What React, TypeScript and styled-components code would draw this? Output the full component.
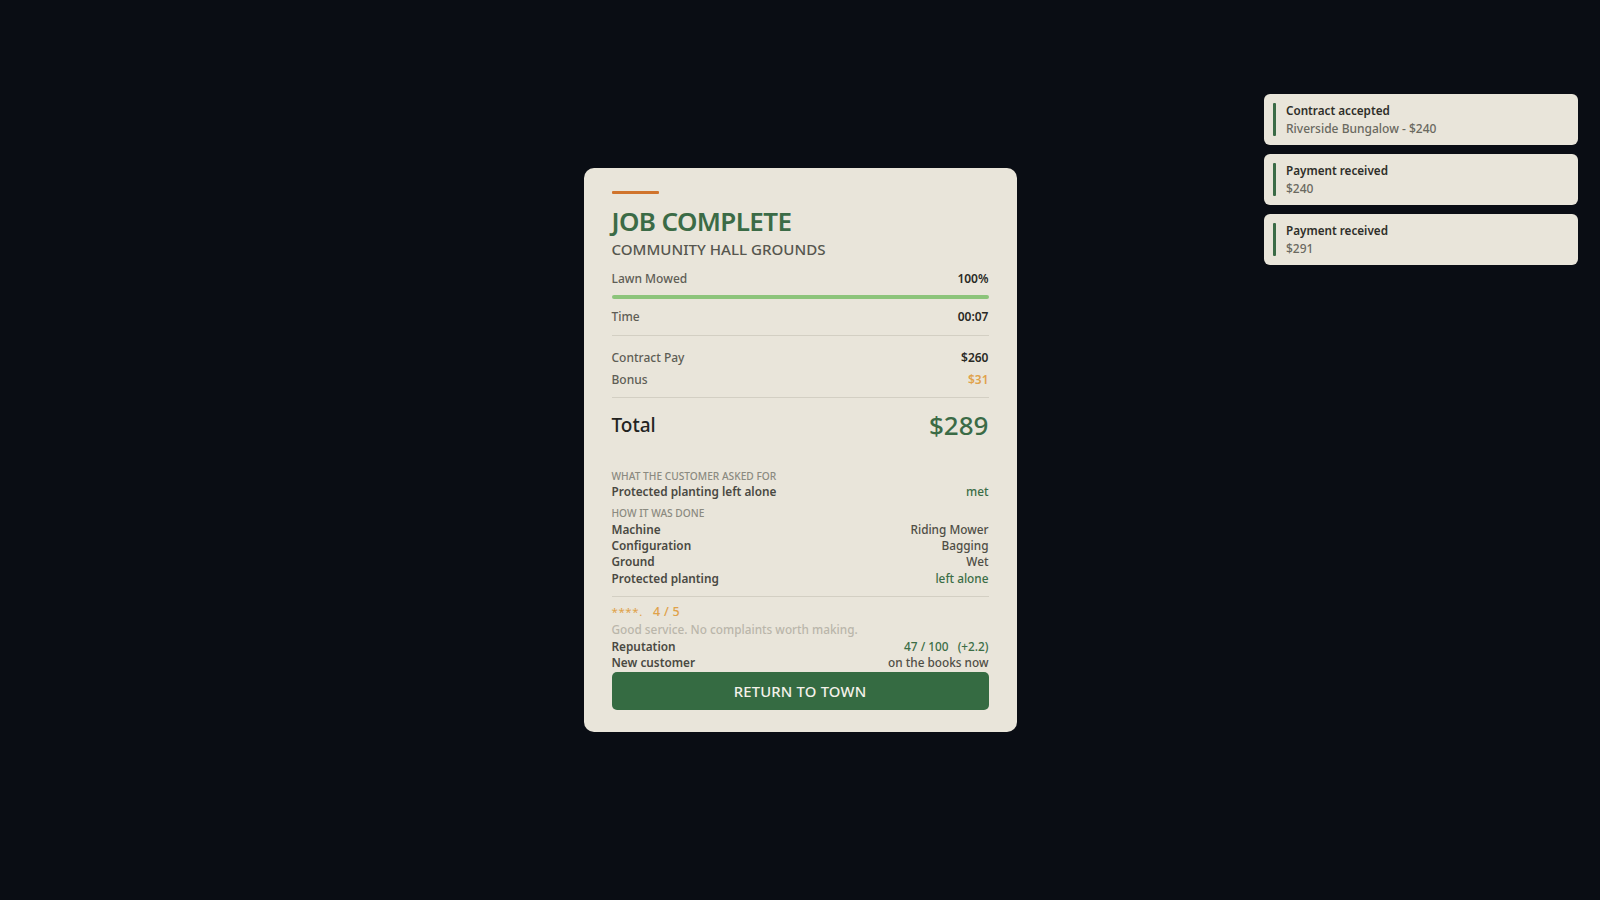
import React from 'react';
import styled, { createGlobalStyle } from 'styled-components';

const GlobalStyle = createGlobalStyle`
  html, body {
    margin: 0;
    padding: 0;
    background: #0a0d14;
    font-family: "Noto Sans", "Open Sans", sans-serif;
  }
`;

const Screen = styled.div`
  position: relative;
  width: 1600px;
  height: 900px;
  display: flex;
  align-items: center;
  justify-content: center;
  overflow: hidden;
`;

const Card = styled.div`
  width: 433px;
  box-sizing: border-box;
  background: #e9e5da;
  border-radius: 10px;
  padding: 23px 28px 22px;
  display: flex;
  flex-direction: column;
`;

const Accent = styled.div`
  width: 47px;
  height: 3px;
  background: #d0742c;
  border-radius: 1px;
`;

const Title = styled.h1`
  margin: 10px 0 0;
  font-size: 26px;
  line-height: 34px;
  font-weight: 600;
  color: #3b6b46;
  letter-spacing: -0.6px;
`;

const Subtitle = styled.h2`
  margin: 0 0 8px;
  font-size: 15.1px;
  line-height: 22px;
  font-weight: 500;
  color: #56564e;
`;

const Row = styled.div`
  display: flex;
  justify-content: space-between;
  align-items: center;
  height: 22px;
  font-size: 12px;
`;

const Label = styled.span<{ $strong?: boolean }>`
  color: ${(p) => (p.$strong ? '#4a4942' : '#5e5d55')};
  font-weight: ${(p) => (p.$strong ? 600 : 500)};
`;

const Value = styled.span<{ $tone?: 'dark' | 'gold' | 'green' | 'muted' }>`
  font-weight: ${(p) => (p.$tone === 'muted' || p.$tone === 'green' ? 500 : 600)};
  color: ${(p) =>
    p.$tone === 'gold'
      ? '#e0a24a'
      : p.$tone === 'green'
      ? '#3b6d46'
      : p.$tone === 'muted'
      ? '#4f4e46'
      : '#2a2a25'};
`;

const Bar = styled.div`
  height: 4px;
  margin: 5px 0 7px;
  background: #d5d1c4;
  border-radius: 2px;
  overflow: hidden;
`;

const Fill = styled.div`
  height: 100%;
  background: #8cc47a;
`;

const Divider = styled.div<{ $top: number; $bottom: number }>`
  height: 1px;
  background: #d3cfc3;
  margin: ${(p) => p.$top}px 0 ${(p) => p.$bottom}px;
`;

const TotalRow = styled.div`
  display: flex;
  justify-content: space-between;
  align-items: center;
  height: 42px;
  margin-bottom: 23px;
`;

const TotalLabel = styled.span`
  font-size: 19px;
  font-weight: 500;
  color: #23231f;
`;

const TotalValue = styled.span`
  font-size: 26px;
  font-weight: 500;
  color: #3b6b46;
`;

const SectionHead = styled.div<{ $gap?: number }>`
  margin-top: ${(p) => p.$gap ?? 0}px;
  font-size: 10.2px;
  line-height: 14px;
  color: #8b8a80;
  text-transform: uppercase;
  font-weight: 500;
`;

const DetailRow = styled(Row)`
  height: 16.4px;
  font-size: 11.8px;
`;

const Rating = styled.div`
  display: flex;
  align-items: baseline;
  height: 18px;
  color: #e0a24a;
`;

const Stars = styled.span`
  font-size: 11.5px;
  letter-spacing: 0.6px;
  margin-right: 10px;
`;

const Score = styled.span`
  font-size: 12.5px;
  font-weight: 500;
  letter-spacing: 0.3px;
`;

const Remark = styled.div`
  font-size: 11.8px;
  line-height: 16px;
  color: #bab6aa;
  font-weight: 500;
`;

const Button = styled.button`
  margin-top: 2px;
  height: 38px;
  border: none;
  border-radius: 5px;
  background: #356b42;
  color: #f4f1ea;
  font-family: inherit;
  font-size: 14.8px;
  font-weight: 500;
  letter-spacing: 0.2px;
  cursor: pointer;
`;

const ToastStack = styled.div`
  position: absolute;
  top: 94px;
  right: 22px;
  width: 314px;
  display: flex;
  flex-direction: column;
  gap: 9px;
`;

const Toast = styled.div`
  height: 51px;
  box-sizing: border-box;
  background: #e9e5da;
  border-radius: 6px;
  padding: 9px 12px 9px 9px;
  display: flex;
  align-items: stretch;
  gap: 10px;
`;

const ToastBar = styled.div`
  width: 3px;
  background: #3b6b46;
  border-radius: 1px;
`;

const ToastText = styled.div`
  display: flex;
  flex-direction: column;
  justify-content: center;
  font-size: 12px;
  line-height: 18.5px;
`;

const ToastTitle = styled.span`
  font-weight: 600;
  color: #2e2e29;
  font-size: 11.7px;
`;

const ToastSub = styled.span`
  color: #6a6960;
  font-weight: 500;
`;

const toasts = [
  { title: 'Contract accepted', sub: 'Riverside Bungalow - $240' },
  { title: 'Payment received', sub: '$240' },
  { title: 'Payment received', sub: '$291' },
];

const details: [string, string, boolean][] = [
  ['Machine', 'Riding Mower', false],
  ['Configuration', 'Bagging', false],
  ['Ground', 'Wet', false],
  ['Protected planting', 'left alone', true],
];

export default function App() {
  const mowed = 100;
  return (
    <>
      <GlobalStyle />
      <Screen>
        <Card>
          <Accent />
          <Title>JOB COMPLETE</Title>
          <Subtitle>COMMUNITY HALL GROUNDS</Subtitle>

          <Row>
            <Label>Lawn Mowed</Label>
            <Value>{mowed}%</Value>
          </Row>
          <Bar>
            <Fill style={{ width: `${mowed}%` }} />
          </Bar>
          <Row>
            <Label>Time</Label>
            <Value>00:07</Value>
          </Row>
          <Divider $top={7} $bottom={11} />
          <Row>
            <Label>Contract Pay</Label>
            <Value>$260</Value>
          </Row>
          <Row>
            <Label>Bonus</Label>
            <Value $tone="gold">$31</Value>
          </Row>
          <Divider $top={6.5} $bottom={5.5} />
          <TotalRow>
            <TotalLabel>Total</TotalLabel>
            <TotalValue>$289</TotalValue>
          </TotalRow>

          <SectionHead>What the customer asked for</SectionHead>
          <DetailRow>
            <Label $strong>Protected planting left alone</Label>
            <Value $tone="green">met</Value>
          </DetailRow>
          <SectionHead $gap={7.3}>How it was done</SectionHead>
          {details.map(([k, v, ok]) => (
            <DetailRow key={k}>
              <Label $strong>{k}</Label>
              <Value $tone={ok ? 'green' : 'muted'}>{v}</Value>
            </DetailRow>
          ))}
          <Divider $top={10} $bottom={6.4} />
          <Rating>
            <Stars>****.</Stars>
            <Score>4 / 5</Score>
          </Rating>
          <Remark>Good service. No complaints worth making.</Remark>
          <DetailRow>
            <Label $strong>Reputation</Label>
            <Value $tone="green">47 / 100&nbsp;&nbsp;&nbsp;(+2.2)</Value>
          </DetailRow>
          <DetailRow>
            <Label $strong>New customer</Label>
            <Value $tone="muted">on the books now</Value>
          </DetailRow>
          <Button>RETURN TO TOWN</Button>
        </Card>

        <ToastStack>
          {toasts.map((t, i) => (
            <Toast key={i}>
              <ToastBar />
              <ToastText>
                <ToastTitle>{t.title}</ToastTitle>
                <ToastSub>{t.sub}</ToastSub>
              </ToastText>
            </Toast>
          ))}
        </ToastStack>
      </Screen>
    </>
  );
}
